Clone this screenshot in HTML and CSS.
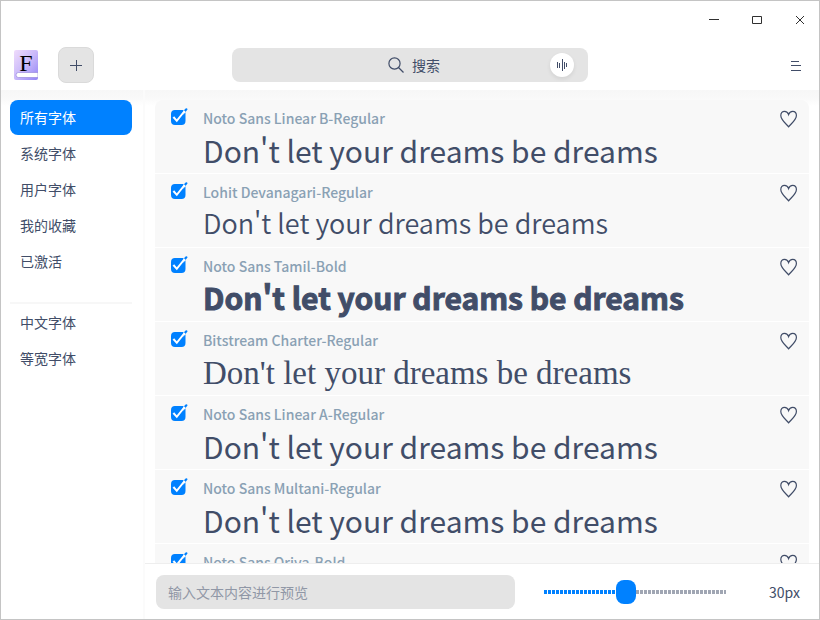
FILE: index.html
```html
<!DOCTYPE html>
<html lang="zh-CN">
<head>
<meta charset="utf-8">
<title>字体管理器</title>
<link rel="stylesheet" href="styles.css">
</head>
<body>
<svg class="sprite" aria-hidden="true">
  <symbol id="tick" viewBox="0 0 18 18">
    <path fill="#0081ff" d="M5 2h7L6.700 10.200 4.300 7.900 2.700 9.500 7 13.700 15.500 4.200V13a4 4 0 0 1-4 4H5a4 4 0 0 1-4-4V6a4 4 0 0 1 4-4z"/>
    <path fill="#0081ff" d="M5 2h8.500v12H3V5z"/>
    <path fill="#0081ff" d="M14 2.200L15.600.600a1 1 0 0 1 1.500 1.500L15.500 4z"/>
    <path fill="none" stroke="#fff" stroke-width="2" d="M3.400 9l3.400 3.800L14.600 3"/>
  </symbol>
  <symbol id="heart" viewBox="0 0 18 18">
    <path fill="none" stroke="#414d68" stroke-width="1.200" d="M8.600 16.800C6.200 13.800.800 10 .800 5.500.800 2.900 2.400 1.300 4.500 1.300 6.500 1.300 8 2.700 8.600 4.500 9.200 2.700 10.700 1.300 12.700 1.300 14.800 1.300 16.400 2.900 16.400 5.500c0 4.500-5.400 8.300-7.800 11.300z"/>
  </symbol>
</svg>
<div class="window">
  <header class="header">
    <div class="titlebar">
      <button class="win-btn" aria-label="最小化"><svg width="10" height="10"><path d="M0 4.500h10"/></svg></button>
      <button class="win-btn" aria-label="最大化"><svg width="10" height="10"><path d="M.500 1.500h9v7h-9z"/></svg></button>
      <button class="win-btn" aria-label="关闭"><svg width="10" height="10"><path d="M1 1l8 8M9 1l-8 8"/></svg></button>
    </div>
    <div class="toolbar">
      <div class="tools">
        <div class="logo">
          <svg class="logo-bg" width="24" height="30" viewBox="0 0 24 30">
            <defs><linearGradient id="book" x1="0" y1="0" x2="1" y2="1"><stop offset="0" stop-color="#f0dcfb"/><stop offset=".5" stop-color="#c9b9fa"/><stop offset="1" stop-color="#9384f6"/></linearGradient></defs>
            <rect width="24" height="30" rx="2" fill="url(#book)"/>
            <path d="M24 22.500H4.500a2.500 2.500 0 0 0 0 5H24z" fill="#fff" stroke="#8e80d8" stroke-width=".6"/>
          </svg>
          <span class="logo-letter">F</span>
        </div>
        <button class="add" aria-label="添加字体"><svg width="12" height="12"><path d="M0 6.500h12M6.500 1v11"/></svg></button>
      </div>
      <div class="search">
        <label class="search-label">
          <svg width="16" height="16" viewBox="0 0 16 16"><circle cx="6.500" cy="6.500" r="5.600"/><path d="M10.500 10.500l5 5"/></svg>
          <input class="search-input" type="text" placeholder="搜索" aria-label="搜索">
        </label>
        <button class="voice" aria-label="语音输入"><svg width="12" height="12"><path d="M1.500 3v6M3.500 4v5M6.500 0v12M8.500 3v7M10.500 4v4"/></svg></button>
      </div>
      <button class="menu" aria-label="菜单"><svg width="10" height="12"><path d="M0 1.500h8M0 5.500h10M0 10.500h10"/></svg></button>
    </div>
  </header>
  <div class="body">
    <nav class="sidebar">
      <a class="nav-item active" href="#all">所有字体</a>
      <a class="nav-item" href="#system">系统字体</a>
      <a class="nav-item" href="#user">用户字体</a>
      <a class="nav-item" href="#favorites">我的收藏</a>
      <a class="nav-item" href="#active">已激活</a>
      <hr class="nav-line">
      <a class="nav-item" href="#chinese">中文字体</a>
      <a class="nav-item" href="#mono">等宽字体</a>
    </nav>
    <main class="content">
      <div class="scroll">
        <ul class="fonts">
          <li class="font">
            <div class="check"><input id="f1" type="checkbox" checked><svg><use href="#tick"/></svg></div>
            <div class="info"><label class="name" for="f1">Noto Sans Linear B-Regular</label><p class="preview">Don't let your dreams be dreams</p></div>
            <button class="fav" aria-label="收藏"><svg><use href="#heart"/></svg></button>
          </li>
          <li class="font">
            <div class="check"><input id="f2" type="checkbox" checked><svg><use href="#tick"/></svg></div>
            <div class="info"><label class="name" for="f2">Lohit Devanagari-Regular</label><p class="preview lohit">Don't let your dreams be dreams</p></div>
            <button class="fav" aria-label="收藏"><svg><use href="#heart"/></svg></button>
          </li>
          <li class="font">
            <div class="check"><input id="f3" type="checkbox" checked><svg><use href="#tick"/></svg></div>
            <div class="info"><label class="name" for="f3">Noto Sans Tamil-Bold</label><p class="preview bold">Don't let your dreams be dreams</p></div>
            <button class="fav" aria-label="收藏"><svg><use href="#heart"/></svg></button>
          </li>
          <li class="font">
            <div class="check"><input id="f4" type="checkbox" checked><svg><use href="#tick"/></svg></div>
            <div class="info"><label class="name" for="f4">Bitstream Charter-Regular</label><p class="preview charter">Don't let your dreams be dreams</p></div>
            <button class="fav" aria-label="收藏"><svg><use href="#heart"/></svg></button>
          </li>
          <li class="font">
            <div class="check"><input id="f5" type="checkbox" checked><svg><use href="#tick"/></svg></div>
            <div class="info"><label class="name" for="f5">Noto Sans Linear A-Regular</label><p class="preview">Don't let your dreams be dreams</p></div>
            <button class="fav" aria-label="收藏"><svg><use href="#heart"/></svg></button>
          </li>
          <li class="font">
            <div class="check"><input id="f6" type="checkbox" checked><svg><use href="#tick"/></svg></div>
            <div class="info"><label class="name" for="f6">Noto Sans Multani-Regular</label><p class="preview">Don't let your dreams be dreams</p></div>
            <button class="fav" aria-label="收藏"><svg><use href="#heart"/></svg></button>
          </li>
          <li class="font">
            <div class="check"><input id="f7" type="checkbox" checked><svg><use href="#tick"/></svg></div>
            <div class="info"><label class="name" for="f7">Noto Sans Oriya-Bold</label></div>
            <button class="fav" aria-label="收藏"><svg><use href="#heart"/></svg></button>
          </li>
        </ul>
      </div>
      <footer class="footer">
        <input class="sample" type="text" placeholder="输入文本内容进行预览" aria-label="预览文本">
        <input class="slider" id="size" type="range" min="14" max="50" value="30" aria-label="字号">
        <output class="size" for="size">30px</output>
      </footer>
    </main>
  </div>
</div>
</body>
</html>
```
FILE: styles.css
```css
* { box-sizing: border-box; }
html, body { height: 100%; margin: 0; }
body {
  font: 400 14px/20px "Noto Sans CJK SC", sans-serif;
  color: #414d68;
  background: #fff;
}
button { padding: 0; border: 0; background: none; color: inherit; font: inherit; display: grid; place-items: center; }
input { font: inherit; color: inherit; margin: 0; }
svg { display: block; fill: none; stroke: #414d68; }
.sprite { position: absolute; width: 0; height: 0; }
.window { height: 100vh; display: flex; flex-direction: column; border: 1px solid #c4c4c4; overflow: hidden; }

.header { flex: none; }
.titlebar { display: flex; justify-content: flex-end; gap: 3px; height: 38px; }
.win-btn { width: 40px; height: 38px; padding-left: 2px; }
.win-btn svg { stroke: #303030; }
.toolbar { display: grid; grid-template-columns: 1fr 356px 1fr; align-items: center; height: 51px; padding: 0 13px; }
.tools { display: flex; align-items: center; gap: 20px; }
.logo { display: grid; place-items: center; width: 24px; height: 30px; }
.logo > * { grid-area: 1 / 1; }
.logo-bg { stroke: none; }
.logo-letter { font: 24px/24px "Liberation Serif", serif; color: #000; padding-bottom: 4px; }
.add { width: 36px; height: 36px; border: 1px solid #dadada; border-radius: 8px; background: #e4e4e4; }
.search { display: grid; grid-template-columns: 1fr auto 1fr; align-items: center; height: 34px; border-radius: 8px; background: #e4e4e4; padding: 0 14px; }
.search-label { grid-column: 2; display: flex; align-items: center; gap: 8px; padding-left: 8px; }
.search-label svg { stroke-width: 1.2; }
.search-input { width: 28px; height: 22px; padding: 0; border: 0; background: none; outline: 0; }
.search-input::placeholder { color: #414d68; opacity: 1; }
.voice { justify-self: end; width: 24px; height: 24px; border-radius: 50%; background: #fff; box-shadow: 0 2px 4px rgba(0, 0, 0, .08); }
.menu { justify-self: end; width: 20px; height: 24px; padding-top: 2px; }

.body { flex: 1; min-height: 0; display: flex; background: linear-gradient(#f7f7f7, #f9f9f9 8px, #fff 16px); }
.sidebar { flex: none; width: 144px; padding: 10px 11px 0 9px; border-right: 2px solid #fbfbfb; display: flex; flex-direction: column; gap: 1px; }
.nav-item { height: 35px; padding: 0 10px; border-radius: 8px; line-height: 35px; color: inherit; text-decoration: none; }
.nav-item.active { background: #0081ff; color: #fff; }
.nav-line { width: 100%; height: 2px; margin: 22px 0 0; border: 0; background: #f7f7f7; }

.content { flex: 1; min-width: 0; display: flex; flex-direction: column; }
.scroll { flex: 1; min-height: 0; overflow: hidden; padding: 10px 10px 0; }
.fonts { list-style: none; margin: 0; padding: 0; border-radius: 8px 8px 0 0; overflow: hidden; }
.font { display: flex; height: 74px; border-bottom: 1px solid #fff; background: #f8f8f8; padding: 8px 11px 0 15px; }
.check { display: grid; width: 18px; height: 18px; }
.check input, .check svg { grid-area: 1 / 1; width: 18px; height: 18px; }
.check input { opacity: 0; }
.check svg { stroke: none; pointer-events: none; }
.info { flex: 1; min-width: 0; padding-left: 15px; }
.name { display: block; font-weight: 500; color: #8aa1b4; }
.preview { margin: 0; font-size: 30px; line-height: 44px; white-space: nowrap; }
.lohit { font-weight: 350; font-size: 27px; line-height: 42px; }
.bold { font-weight: 700; line-height: 42px; -webkit-text-stroke: 1px #414d68; }
.charter { font-family: "Liberation Serif", serif; font-size: 33px; line-height: 46px; }
.fav { width: 18px; height: 18px; margin-top: 2px; }
.fav svg { width: 18px; height: 18px; }

.footer { flex: none; display: flex; align-items: center; height: 56px; border-top: 1px solid #eee; background: #fff; padding: 0 19px 0 11px; }
.sample { flex: 1; min-width: 0; height: 34px; padding: 0 12px; border: 0; border-radius: 8px; background: #e4e4e4; }
.sample::placeholder { color: #9097a6; opacity: 1; }
.slider { appearance: none; width: 182px; height: 24px; margin: 0 28px 0 29px; background: none; }
.slider::-webkit-slider-runnable-track {
  height: 24px;
  background:
    repeating-linear-gradient(90deg, transparent 0 3px, #fff 3px 4px),
    linear-gradient(90deg, #0081ff 82px, #a0a6b3 82px) center / 100% 4px no-repeat;
}
.slider::-webkit-slider-thumb { appearance: none; width: 20px; height: 24px; border-radius: 8px; background: #0081ff; }
.size { width: 46px; text-align: right; }
```
